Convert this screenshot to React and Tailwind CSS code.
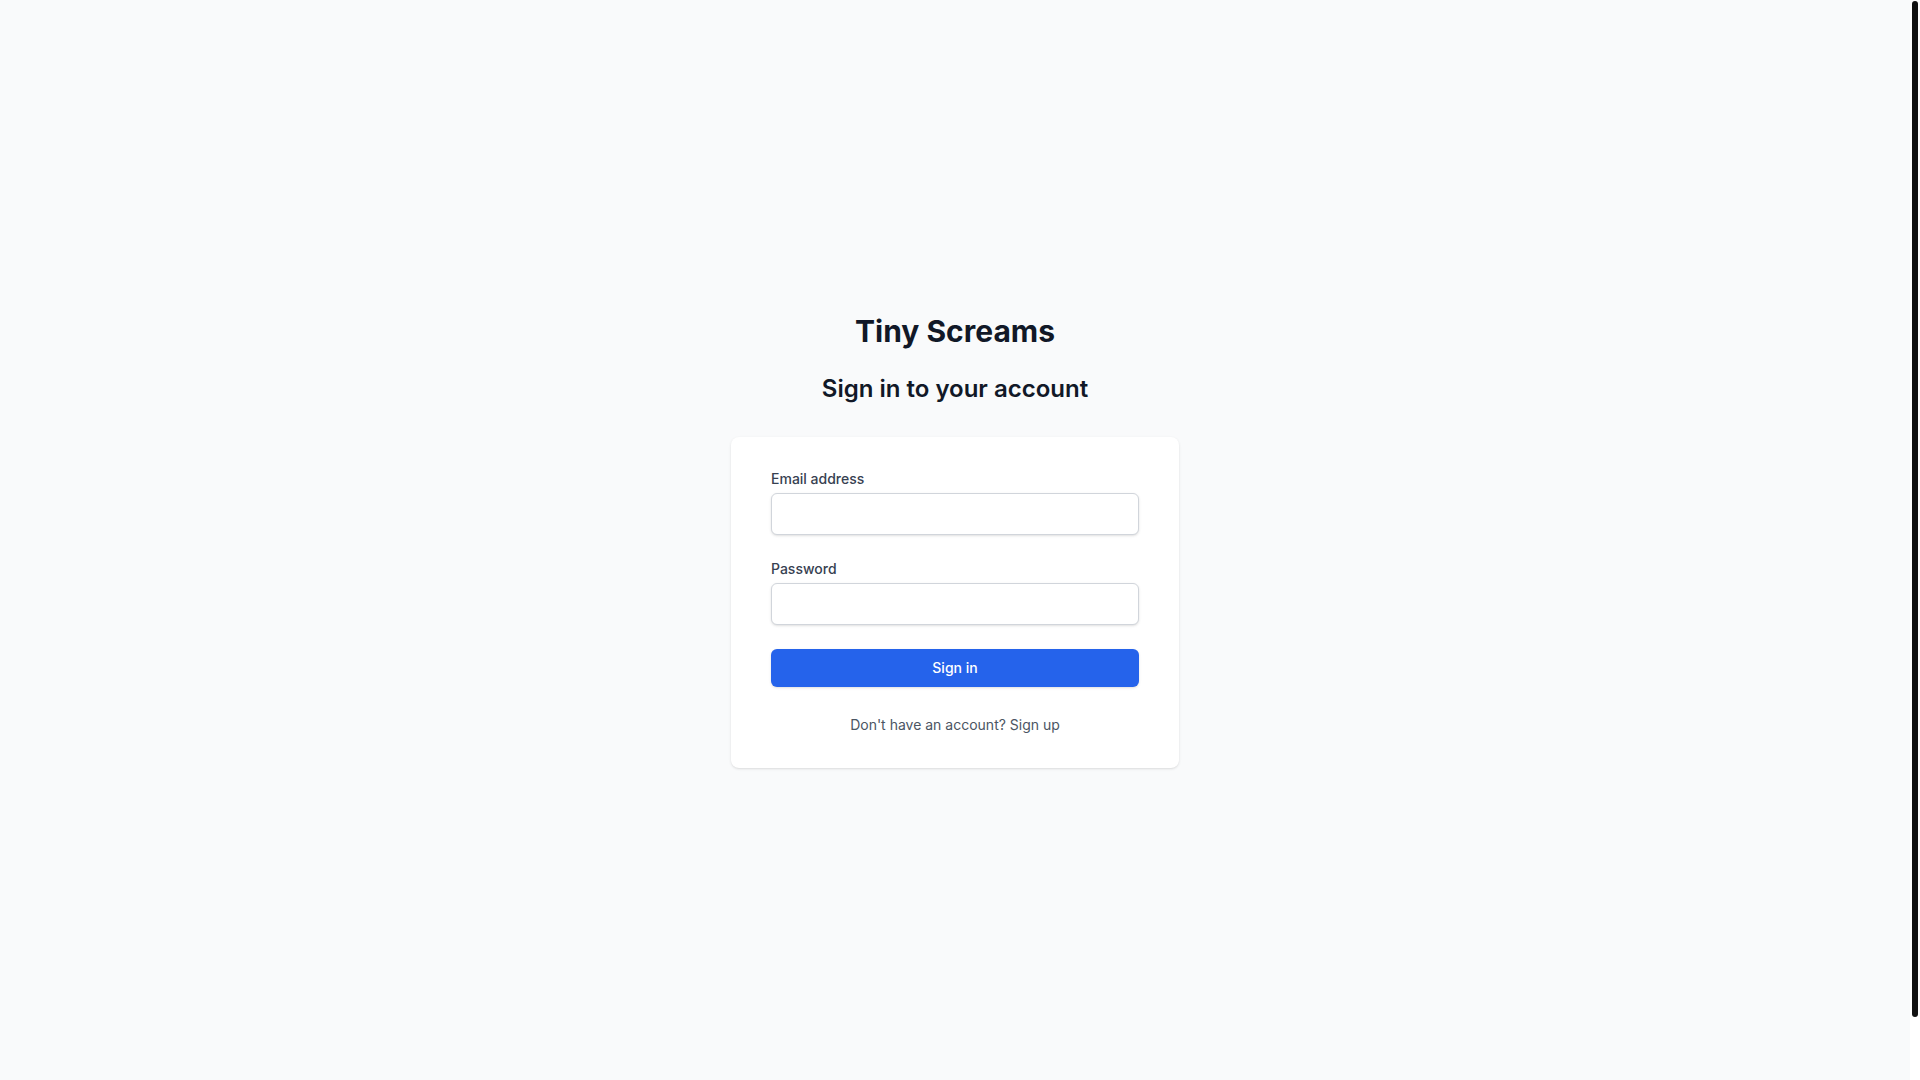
export default function App() {
  return (
    <div
      className="relative h-screen overflow-y-auto bg-[#f9fafb] pr-[10px]"
      style={{ fontFamily: 'Inter, "Noto Sans", sans-serif' }}
    >
      <div className="min-h-screen flex flex-col items-center justify-center">
        <h1 className="text-3xl font-bold text-[#111827] text-center">Tiny Screams</h1>
        <h2 className="mt-6 text-2xl font-semibold text-[#111827] text-center">Sign in to your account</h2>

        <div className="mt-8 w-[448px] bg-white rounded-lg shadow px-10 pt-8 pb-[33px]">
          <form className="space-y-6" onSubmit={(e) => e.preventDefault()}>
            <div>
              <label htmlFor="email" className="block text-sm font-medium text-[#374151]">
                Email address
              </label>
              <input
                id="email"
                type="email"
                className="mt-1 block w-full h-[42px] rounded-md border border-[#d1d5db] bg-white px-3 py-2 shadow-sm focus:outline-none"
              />
            </div>
            <div>
              <label htmlFor="password" className="block text-sm font-medium text-[#374151]">
                Password
              </label>
              <input
                id="password"
                type="password"
                className="mt-1 block w-full h-[42px] rounded-md border border-[#d1d5db] bg-white px-3 py-2 shadow-sm focus:outline-none"
              />
            </div>
            <button
              type="submit"
              className="w-full rounded-md border border-transparent bg-[#2563eb] py-2 px-4 text-sm font-medium text-white shadow-sm hover:bg-[#1d4ed8]"
            >
              Sign in
            </button>
          </form>
          <p className="mt-[28px] text-center text-sm text-[#4b5563]">
            Don't have an account? <a href="#" className="text-[#4b5563]">Sign up</a>
          </p>
        </div>
      </div>
      <div className="h-[68px]" />

      {/* scrollbar strip, drawn since the page shot hides the real one */}
      <div className="fixed top-0 right-0 h-screen w-[10px] bg-white px-[2px] pt-[1px]">
        <div className="h-[1016px] w-full rounded-full bg-[#111111]" />
      </div>
    </div>
  )
}
